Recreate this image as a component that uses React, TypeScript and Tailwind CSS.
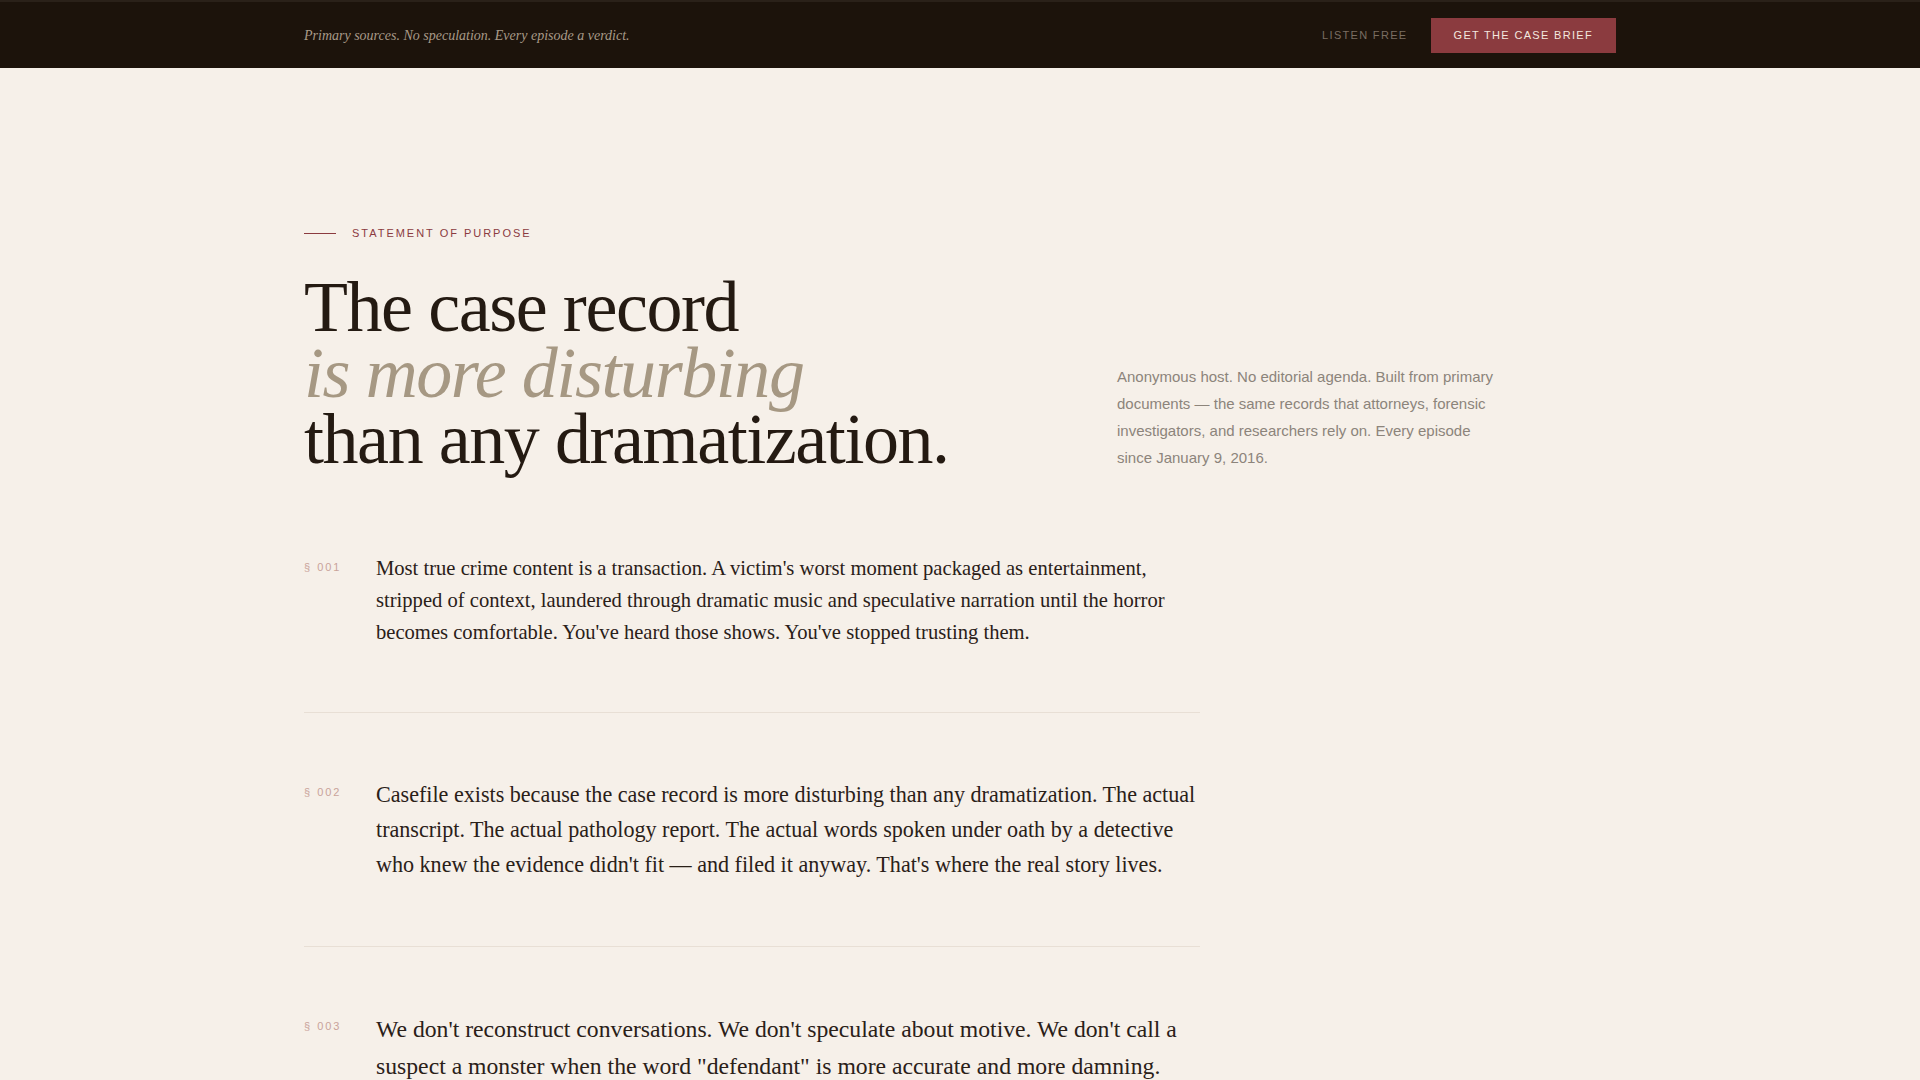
const serif = { fontFamily: '"Liberation Serif", "Times New Roman", serif' };

const sections = [
  {
    num: "§ 001",
    size: "text-[20.6px] leading-[32px]",
    text: "Most true crime content is a transaction. A victim's worst moment packaged as entertainment, stripped of context, laundered through dramatic music and speculative narration until the horror becomes comfortable. You've heard those shows. You've stopped trusting them.",
  },
  {
    num: "§ 002",
    size: "text-[22.1px] leading-[35px]",
    text: "Casefile exists because the case record is more disturbing than any dramatization. The actual transcript. The actual pathology report. The actual words spoken under oath by a detective who knew the evidence didn't fit — and filed it anyway. That's where the real story lives.",
  },
  {
    num: "§ 003",
    size: "text-[23.7px] leading-[36.6px]",
    text: 'We don\'t reconstruct conversations. We don\'t speculate about motive. We don\'t call a suspect a monster when the word "defendant" is more accurate and more damning.',
  },
];

export default function App() {
  return (
    <main
      className="min-h-screen bg-[#f6f0e9] text-[#241a12]"
      style={{ fontFamily: '"Liberation Sans", Arial, sans-serif' }}
    >
      {/* top bar */}
      <header className="bg-[#1c130b] border-t-2 border-[#2a2119]">
        <div className="max-w-[1312px] mx-auto h-[66px] flex items-center justify-between">
          <p className="italic text-[14px] text-[#a89a88]" style={serif}>
            Primary sources. No speculation. Every episode a verdict.
          </p>
          <div className="flex items-center gap-[23px]">
            <a className="text-[11px] tracking-[0.12em] text-[#7a6e62]">LISTEN FREE</a>
            <button className="h-[35px] px-[23px] bg-[#8b3b3f] text-[#f3e7df] text-[11px] tracking-[0.12em]">
              GET THE CASE BRIEF
            </button>
          </div>
        </div>
      </header>

      <div className="max-w-[1312px] mx-auto pt-[157px]">
        {/* hero */}
        <section className="flex items-end justify-between">
          <div>
            <div className="flex items-center gap-4 mb-8">
              <span className="block w-8 h-px bg-[#8b3b3f]" />
              <span className="text-[11px] tracking-[0.18em] text-[#8b3b3f]">
                STATEMENT OF PURPOSE
              </span>
            </div>
            <h1
              className="text-[72px] leading-[0.92] tracking-[-0.02em] font-normal"
              style={serif}
            >
              The case record
              <br />
              <em className="text-[#a69883]">is more disturbing</em>
              <br />
              than any dramatization.
            </h1>
          </div>
          <div className="w-[499px] pb-px">
            <p className="max-w-[382px] text-[15px] leading-[1.8] text-[#8c847b]">
              Anonymous host. No editorial agenda. Built from primary documents — the same
              records that attorneys, forensic investigators, and researchers rely on. Every
              episode since January 9, 2016.
            </p>
          </div>
        </section>

        {/* statements */}
        <div className="max-w-4xl mt-4">
          {sections.map((s, i) => (
            <div
              key={s.num}
              className={`flex gap-6 py-16 ${i < sections.length - 1 ? "border-b border-[#e8dfd5]" : ""}`}
            >
              <span className="w-12 shrink-0 pt-[7px] text-[11px] tracking-[0.18em] text-[#c9a39a]">
                {s.num}
              </span>
              <p className={`${s.size} text-[#2a2018]`} style={serif}>
                {s.text}
              </p>
            </div>
          ))}
        </div>
      </div>
    </main>
  );
}
